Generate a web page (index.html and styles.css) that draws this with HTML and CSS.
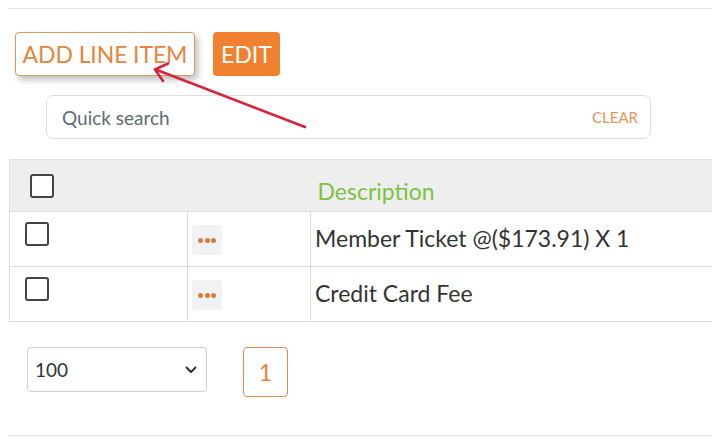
FILE: index.html
```html
<!DOCTYPE html>
<html lang="en">
<head>
    <meta charset="UTF-8">
    <meta name="viewport" content="width=device-width, initial-scale=1.0">
    <title>Line Items</title>
    <link rel="stylesheet" href="styles.css">
</head>
<body>
    <div class="panel">
        <div class="toolbar">
            <button class="btn btn-outline btn-raised">ADD LINE ITEM</button>
            <button class="btn btn-fill">EDIT</button>
        </div>

        <div class="search">
            <input type="text" class="search-input" placeholder="Quick search">
            <span class="search-clear">CLEAR</span>
        </div>

        <table class="grid">
            <colgroup>
                <col class="col-check">
                <col class="col-menu">
                <col>
            </colgroup>
            <thead>
                <tr>
                    <th class="head-check"><span class="checkbox"></span></th>
                    <th></th>
                    <th class="head-desc">Description</th>
                </tr>
            </thead>
            <tbody>
                <tr>
                    <td class="cell-check"><span class="checkbox"></span></td>
                    <td class="cell-menu"><span class="dots"><i></i><i></i><i></i></span></td>
                    <td class="cell-text">Member Ticket @($173.91) X 1</td>
                </tr>
                <tr>
                    <td class="cell-check"><span class="checkbox"></span></td>
                    <td class="cell-menu"><span class="dots"><i></i><i></i><i></i></span></td>
                    <td class="cell-text">Credit Card Fee</td>
                </tr>
            </tbody>
        </table>

        <div class="pager">
            <div class="page-size">
                <span>100</span>
                <svg class="chevron" width="12" height="8" viewBox="0 0 12 8"><path d="M1.5 1.5 L6 6 L10.5 1.5" fill="none" stroke="#333" stroke-width="2" stroke-linecap="round" stroke-linejoin="round"/></svg>
            </div>
            <span class="page-num">1</span>
        </div>
    </div>

    <!-- annotation arrow drawn over the page -->
    <svg class="annotation" width="712" height="448" viewBox="0 0 712 448">
        <path d="M305 127 L157 70" stroke="#d9233a" stroke-width="2.6" stroke-linecap="round" fill="none"/>
        <path d="M168 63.5 L155 69.5 L163 81" stroke="#d9233a" stroke-width="2.6" stroke-linecap="round" stroke-linejoin="round" fill="none"/>
    </svg>
</body>
</html>
```

FILE: styles.css
```css
body {
    margin: 0;
    font-family: Lato, "Open Sans", sans-serif;
    background: #fff;
    color: #333;
    overflow: hidden;
    width: 712px;
    height: 448px;
    position: relative;
}

.panel {
    margin: 8px 0 0 8px;
    border-top: 1px solid #e4e4e4;
    border-bottom: 1px solid #e0e0e0;
}

/* Top buttons */
.toolbar {
    display: flex;
    gap: 18px;
    padding: 23px 0 0 7px;
}

.btn {
    height: 44px;
    padding: 0;
    border-radius: 4px;
    font-family: inherit;
    font-size: 23px;
    white-space: nowrap;
    cursor: pointer;
}

.btn-outline {
    width: 180px;
    background: #fff;
    color: #e8843c;
    border: 1px solid #d9995f;
    letter-spacing: -0.1px;
}

.btn-raised {
    box-shadow: 3px 4px 6px rgba(0, 0, 0, 0.25);
}

.btn-fill {
    width: 67px;
    background: #f08130;
    color: #fff;
    border: none;
}

/* Search box */
.search {
    display: flex;
    align-items: center;
    width: 605px;
    height: 44px;
    box-sizing: border-box;
    margin: 19px 0 0 38px;
    border: 1px solid #dedede;
    border-radius: 7px;
}

.search-input {
    flex: 1;
    border: none;
    outline: none;
    padding: 0 0 0 15px;
    font-family: inherit;
    font-size: 19px;
    color: #333;
    background: transparent;
}

.search-input::placeholder {
    color: #606b72;
}

.search-clear {
    padding-right: 12px;
    font-size: 15px;
    color: #e6945c;
}

/* Table */
.grid {
    margin: 20px 0 0 1px;
    width: 720px;
    border-collapse: collapse;
    table-layout: fixed;
}

.col-check { width: 178px; }
.col-menu { width: 123px; }

.grid th,
.grid td {
    padding: 0;
    text-align: left;
    vertical-align: top;
}

.grid thead tr {
    height: 52px;
    background: #eeeeee;
    border-top: 1px solid #e2e2e2;
    border-left: 1px solid #e2e2e2;
}

.head-check {
    padding: 14px 0 0 20px !important;
}

.head-desc {
    padding: 17px 0 0 7px !important;
    font-weight: normal;
    font-size: 23px;
    color: #7dc242;
}

.grid tbody tr {
    height: 55px;
}

.grid td {
    border: 1px solid #dcdcdc;
}

.cell-check {
    padding: 10px 0 0 15px !important;
}

.cell-menu {
    padding: 13px 0 0 4px !important;
}

.cell-text {
    padding: 12px 0 0 4px !important;
    font-size: 23px;
    color: #333;
}

.checkbox {
    display: block;
    width: 24px;
    height: 24px;
    box-sizing: border-box;
    border: 2px solid #444;
    border-radius: 3px;
    background: #fff;
}

.dots {
    display: flex;
    align-items: center;
    justify-content: center;
    gap: 1.5px;
    width: 30px;
    height: 30px;
    border-radius: 3px;
    background: #f1f2f4;
}

.dots i {
    width: 5px;
    height: 5px;
    border-radius: 50%;
    background: #e07a35;
}

/* Pagination */
.pager {
    display: flex;
    align-items: flex-start;
    gap: 36px;
    padding: 25px 0 38px 19px;
}

.page-size {
    display: flex;
    align-items: center;
    justify-content: space-between;
    width: 180px;
    height: 45px;
    box-sizing: border-box;
    padding: 0 8px 0 7px;
    border: 1px solid #cfcfcf;
    border-radius: 4px;
    font-size: 19px;
    color: #333;
}

.chevron {
    margin-right: 1px;
}

.page-num {
    display: flex;
    align-items: center;
    justify-content: center;
    width: 45px;
    height: 50px;
    box-sizing: border-box;
    border: 1px solid #de8a4e;
    border-radius: 4px;
    font-size: 23px;
    color: #e8843c;
}

/* Annotation arrow */
.annotation {
    position: absolute;
    top: 0;
    left: 0;
    pointer-events: none;
}
```
